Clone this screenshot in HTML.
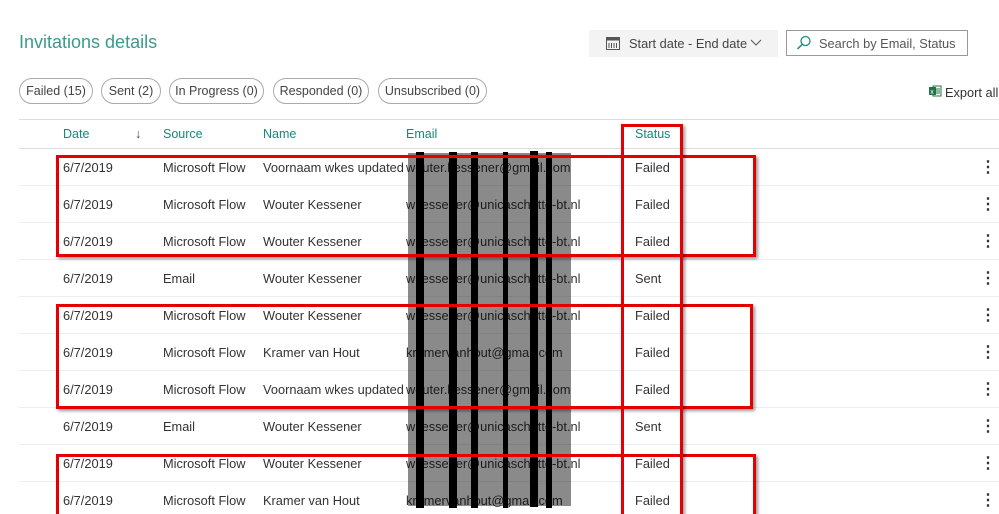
<!DOCTYPE html>
<html style="width:999px;height:514px;overflow:hidden"><head><style>
body{margin:0;width:999px;height:514px;overflow:hidden;background:#fff;font-family:"Liberation Sans",sans-serif;position:relative;color:#333}
.a{position:absolute}
h1{position:absolute;left:19px;top:32px;margin:0;font-weight:normal;font-size:18px;color:#3a9a8c}
.pill{position:absolute;top:78px;height:24px;border:1px solid #aaa;border-radius:13px;font-size:12.5px;line-height:24px;text-align:center;color:#444}
.hd{position:absolute;top:127px;font-size:12.5px;color:#128a7a}
.row{position:absolute;left:19px;width:980px;height:36px;border-bottom:1px solid #eee;font-size:12.8px;color:#333}
.row span{position:absolute;top:1px;line-height:36px}
.row span.k{font-size:16px;font-weight:bold;left:961px}
.red{position:absolute;border:3px solid #e30000;box-shadow:2px 2px 3px rgba(0,0,0,.4)}
.bar{position:absolute;background:#000;top:152px;height:356px}
</style></head><body>
<h1>Invitations details</h1>
<div class="a" style="left:589px;top:30px;width:189px;height:27px;background:#f3f3f3"></div>
<svg class="a" style="left:605px;top:35px" width="16" height="16" viewBox="0 0 16 16"><rect x="1.5" y="2.5" width="13" height="12" fill="none" stroke="#555"/><rect x="1.5" y="2.5" width="13" height="3" fill="#555"/><path d="M4 8v5M6.5 8v5M9 8v5M11.5 8v5" stroke="#555"/></svg>
<div class="a" style="left:629px;top:36px;font-size:12.8px;color:#444">Start date - End date</div>
<svg class="a" style="left:750px;top:38px" width="12" height="10"><path d="M1 2l5 5 5-5" fill="none" stroke="#555"/></svg>
<div class="a" style="left:786px;top:30px;width:180px;height:24px;border:1px solid #999"></div>
<svg class="a" style="left:796px;top:35px" width="16" height="16"><circle cx="9.5" cy="6" r="4.5" fill="none" stroke="#1a8a7a" stroke-width="1.3"/><path d="M6.3 9.3L1.5 14" stroke="#1a8a7a" stroke-width="1.5"/></svg>
<div class="a" style="left:819px;top:36px;font-size:12.8px;color:#555">Search by Email, Status</div>
<div class="pill" style="left:19px;width:72px">Failed (15)</div>
<div class="pill" style="left:101px;width:58px">Sent (2)</div>
<div class="pill" style="left:169px;width:93px">In Progress (0)</div>
<div class="pill" style="left:273px;width:94px">Responded (0)</div>
<div class="pill" style="left:378px;width:107px">Unsubscribed (0)</div>
<svg class="a" style="left:928px;top:84px" width="14" height="14"><rect x="5" y="2" width="8" height="10" fill="#fff" stroke="#217346"/><path d="M7 5h5M7 7h5M7 9h5" stroke="#217346"/><rect x="1" y="3" width="7" height="8" fill="#217346"/><text x="2.2" y="10" font-size="7" fill="#fff" font-family="Liberation Sans">x</text></svg>
<div class="a" style="left:945px;top:85px;font-size:12.8px;color:#333">Export all</div>
<div class="a" style="left:19px;top:119px;width:980px;height:1px;background:#ddd"></div>
<div class="hd" style="left:63px">Date</div>
<div class="hd" style="left:135px;color:#444">↓</div>
<div class="hd" style="left:163px">Source</div>
<div class="hd" style="left:263px">Name</div>
<div class="hd" style="left:406px">Email</div>
<div class="hd" style="left:635px">Status</div>
<div class="a" style="left:19px;top:148px;width:980px;height:1px;background:#ddd"></div>
<div class="row" style="top:149px"><span style="left:44px">6/7/2019</span><span style="left:144px">Microsoft Flow</span><span style="left:244px">Voornaam wkes updated</span><span style="left:387px">wouter.kessener@gmail.com</span><span style="left:616px">Failed</span><span class="k">⋮</span></div>
<div class="row" style="top:186px"><span style="left:44px">6/7/2019</span><span style="left:144px">Microsoft Flow</span><span style="left:244px">Wouter Kessener</span><span style="left:387px">wkessener@unicaschutte-bt.nl</span><span style="left:616px">Failed</span><span class="k">⋮</span></div>
<div class="row" style="top:223px"><span style="left:44px">6/7/2019</span><span style="left:144px">Microsoft Flow</span><span style="left:244px">Wouter Kessener</span><span style="left:387px">wkessener@unicaschutte-bt.nl</span><span style="left:616px">Failed</span><span class="k">⋮</span></div>
<div class="row" style="top:260px"><span style="left:44px">6/7/2019</span><span style="left:144px">Email</span><span style="left:244px">Wouter Kessener</span><span style="left:387px">wkessener@unicaschutte-bt.nl</span><span style="left:616px">Sent</span><span class="k">⋮</span></div>
<div class="row" style="top:297px"><span style="left:44px">6/7/2019</span><span style="left:144px">Microsoft Flow</span><span style="left:244px">Wouter Kessener</span><span style="left:387px">wkessener@unicaschutte-bt.nl</span><span style="left:616px">Failed</span><span class="k">⋮</span></div>
<div class="row" style="top:334px"><span style="left:44px">6/7/2019</span><span style="left:144px">Microsoft Flow</span><span style="left:244px">Kramer van Hout</span><span style="left:387px">kramervanhout@gmail.com</span><span style="left:616px">Failed</span><span class="k">⋮</span></div>
<div class="row" style="top:371px"><span style="left:44px">6/7/2019</span><span style="left:144px">Microsoft Flow</span><span style="left:244px">Voornaam wkes updated</span><span style="left:387px">wouter.kessener@gmail.com</span><span style="left:616px">Failed</span><span class="k">⋮</span></div>
<div class="row" style="top:408px"><span style="left:44px">6/7/2019</span><span style="left:144px">Email</span><span style="left:244px">Wouter Kessener</span><span style="left:387px">wkessener@unicaschutte-bt.nl</span><span style="left:616px">Sent</span><span class="k">⋮</span></div>
<div class="row" style="top:445px"><span style="left:44px">6/7/2019</span><span style="left:144px">Microsoft Flow</span><span style="left:244px">Wouter Kessener</span><span style="left:387px">wkessener@unicaschutte-bt.nl</span><span style="left:616px">Failed</span><span class="k">⋮</span></div>
<div class="row" style="top:482px"><span style="left:44px">6/7/2019</span><span style="left:144px">Microsoft Flow</span><span style="left:244px">Kramer van Hout</span><span style="left:387px">kramervanhout@gmail.com</span><span style="left:616px">Failed</span><span class="k">⋮</span></div>
<div class="a" style="left:408px;top:153px;width:163px;height:353px;background:#8a8a8a;mix-blend-mode:multiply"></div>
<div class="bar" style="left:416px;width:8px"></div>
<div class="bar" style="left:449px;width:8px"></div>
<div class="bar" style="left:471px;width:7px"></div>
<div class="bar" style="left:503px;width:5px"></div>
<div class="bar" style="left:530px;width:8px;top:151px"></div>
<div class="bar" style="left:546px;width:6px"></div>
<div class="red" style="left:56px;top:155px;width:694px;height:96px"></div>
<div class="red" style="left:56px;top:304px;width:691px;height:99px"></div>
<div class="red" style="left:56px;top:454px;width:694px;height:60px"></div>
<div class="red" style="left:621px;top:124px;width:56px;height:400px"></div>
</body></html>
